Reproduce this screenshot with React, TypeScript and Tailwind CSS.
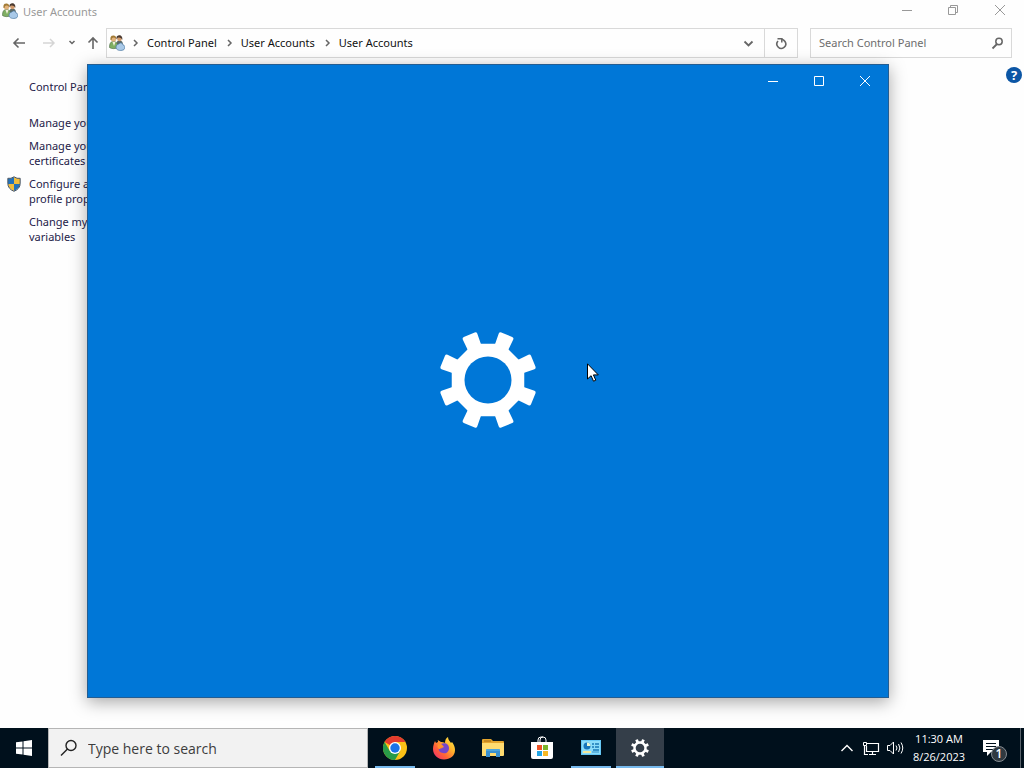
import type { ReactNode } from 'react';

const teeth = [22.5, 67.5, 112.5, 157.5, 202.5, 247.5, 292.5, 337.5];

const Gear = ({ className, hole }: { className: string; hole: string }) => (
  <svg viewBox="-50 -50 100 100" className={className} aria-hidden="true">
    <polygon
      fill="currentColor"
      points="-15,-37 15,-37 37,-15 37,15 15,37 -15,37 -37,15 -37,-15"
    />
    {teeth.map((angle) => (
      <path
        key={angle}
        fill="currentColor"
        transform={`rotate(${angle})`}
        d="M-7-30 -8-48Q-8-50-6-50H6Q8-50 8-48L7-30Z"
      />
    ))}
    <circle r="24" className={hole} />
  </svg>
);

const UsersIcon = () => (
  <svg viewBox="0 0 16 16" className="size-4 shrink-0" aria-hidden="true">
    <path d="M7 10c0-3 1-4.500 3.500-4.500S14 7 14 10Z" fill="#5d6a66" />
    <circle cx="10.500" cy="3.800" r="2.400" fill="#d19a6c" />
    <path d="M7.500 4.500C7 1 9 .3 10.500.3S14 2 13.200 5C13 3 10 2 8.500 3Z" fill="#4b3a30" />
    <path d="M.5 12.500c0-4 1-6 4-6S9 9 9 12.500c-2 1.500-7 1.500-8.500 0Z" fill="#7fae62" stroke="#4b6b43" strokeWidth=".6" />
    <path d="M3.500 7h3L5 11Z" fill="#f3f1dc" />
    <circle cx="4.500" cy="4" r="2.600" fill="#e2b27c" />
    <path d="M1.500 5C1 1 3 .5 4.500.5S7.500 1.500 7.200 4C5 2 3 2 2.500 5Z" fill="#a17a35" />
    <path d="M7 13c0-3 1.500-4 3-4 1-2 4-1 4 1 2 0 2.500 3 1 4.500-2 1.500-7 1.500-8-1.500Z" fill="#a9c9e8" stroke="#4f7ba3" strokeWidth=".7" />
  </svg>
);

const Shield = () => (
  <svg viewBox="0 0 14 16" className="h-4 w-3.5" aria-hidden="true">
    <path d="M7 1Q4 3 1 2.500V8H7Z" fill="#2372b9" />
    <path d="M7 1Q10 3 13 2.500V8H7Z" fill="#f0bd3d" />
    <path d="M1 8H7V15Q1 12 1 8Z" fill="#f0bd3d" />
    <path d="M13 8H7V15Q13 12 13 8Z" fill="#2372b9" />
    <path d="M7 .8Q4 3 .8 2.300V7Q.8 13 7 15.300 13.200 13 13.200 7V2.300Q10 3 7 .8Z" fill="none" stroke="#475463" />
  </svg>
);

const Chevron = () => (
  <svg viewBox="0 0 6 8" className="h-2 w-1.5 shrink-0" fill="none" stroke="#666" strokeWidth="1.500" aria-hidden="true">
    <path d="M1 1l3 3-3 3" />
  </svg>
);

const Glyph = ({ children }: { children: ReactNode }) => (
  <svg viewBox="0 0 16 16" className="size-4" fill="none" stroke="currentColor" aria-hidden="true">
    {children}
  </svg>
);

const IconButton = ({ label, className, children }: { label: string; className: string; children: ReactNode }) => (
  <button type="button" aria-label={label} className={`flex shrink-0 items-center justify-center ${className}`}>
    {children}
  </button>
);

const Minimize = () => <Glyph><path d="M3 8.500h10" /></Glyph>;
const Maximize = () => <Glyph><path d="M3.500 3.500h9v9h-9z" /></Glyph>;
const Restore = () => <Glyph><path d="M3.500 5.500h7v7h-7zM5.500 5.500v-2h7v7h-2" /></Glyph>;
const Close = () => <Glyph><path d="M3 3l10 10M13 3L3 13" /></Glyph>;

const crumbs = ['Control Panel', 'User Accounts', 'User Accounts'];

const tasks = [
  { lines: ['Manage your credentials'], shield: false },
  { lines: ['Manage your file encryption', 'certificates'], shield: false },
  { lines: ['Configure advanced user', 'profile properties'], shield: true },
  { lines: ['Change my environment', 'variables'], shield: false },
];

const Explorer = () => (
  <div className="flex-1 font-['Noto_Sans','Open_Sans',sans-serif] text-[11px] leading-[15px]">
    {/* Title bar */}
    <header className="flex h-6 items-start justify-between">
      <div className="flex items-center gap-[5px] pt-[3px] pl-0.5 text-[#999]">
        <UsersIcon />
        <h1>User Accounts</h1>
      </div>
      <div className="flex text-[#999]">
        <IconButton label="Minimize" className="h-5 w-[46px]"><Minimize /></IconButton>
        <IconButton label="Restore" className="h-5 w-[46px]"><Restore /></IconButton>
        <IconButton label="Close" className="h-5 w-12"><Close /></IconButton>
      </div>
    </header>

    {/* Address bar */}
    <div className="flex items-center pt-1 pr-3">
      <nav aria-label="History" className="flex w-[106px] shrink-0 items-center pl-[11px] text-[#666]">
        <IconButton label="Back" className="w-4">
          <Glyph><path strokeWidth="1.600" d="M14 8H3M7.500 3.500L3 8l4.500 4.500" /></Glyph>
        </IconButton>
        <IconButton label="Forward" className="ml-3.5 w-4 text-[#d5d5d5]">
          <Glyph><path strokeWidth="1.500" d="M2 8h11M9 4l4 4-4 4" /></Glyph>
        </IconButton>
        <IconButton label="Recent locations" className="ml-[7px] w-4">
          <Glyph><path strokeWidth="1.500" d="M5.500 6L8 8.500 10.500 6" /></Glyph>
        </IconButton>
        <IconButton label="Up" className="ml-[5px] w-4">
          <Glyph><path strokeWidth="1.600" d="M8 14V3M3.500 7.500L8 3l4.500 4.500" /></Glyph>
        </IconButton>
      </nav>
      <div className="flex h-[30px] flex-1 items-center border border-[#d9d9d9] pl-0.5">
        <UsersIcon />
        <div className="flex flex-1 items-center gap-0.5 pb-0.5">
          {crumbs.map((crumb, i) => (
            <div key={i} className="flex items-center">
              <span className="flex w-[22px] justify-center pt-0.5"><Chevron /></span>
              <a href="#" className="text-[#111]">{crumb}</a>
            </div>
          ))}
        </div>
        <IconButton label="Previous locations" className="h-7 w-8 text-[#666]">
          <Glyph><path strokeWidth="1.800" d="M4.500 6.500l4 4 4-4" /></Glyph>
        </IconButton>
        <IconButton label="Refresh" className="h-7 w-[33px] border-l border-[#d9d9d9] text-[#666]">
          <Glyph>
            <path strokeWidth="1.600" d="M5 6A4.400 4.400 0 1 0 12 6.500Q11 5 8.500 4" />
            <path strokeWidth="1.500" d="M4.500 3.800h4.300v3.700" />
          </Glyph>
        </IconButton>
      </div>
      <label className="ml-3 flex h-[30px] w-[202px] items-center border border-[#d9d9d9] pr-1.5 pl-2">
        <input
          type="text"
          aria-label="Search Control Panel"
          placeholder="Search Control Panel"
          className="min-w-0 flex-1 pb-0.5 outline-none placeholder:text-[#6d6d6d]"
        />
        <span className="text-[#666]">
          <Glyph><circle cx="10" cy="6.500" r="3.200" strokeWidth="1.500" /><path strokeWidth="1.800" d="M8 9l-4.500 4.500" /></Glyph>
        </span>
      </label>
    </div>

    <div className="flex items-start justify-between pt-2">
      {/* Task links */}
      <aside className="flex w-52 flex-col gap-2 pt-[13px] pl-[29px] text-[#242149]">
        <a href="#" className="mb-[13px]">Control Panel Home</a>
        {tasks.map((task) => (
          <a key={task.lines[0]} href="#" className="relative whitespace-nowrap">
            {task.shield && <span className="absolute top-0 -left-[22px]"><Shield /></span>}
            {task.lines.map((line) => (
              <span key={line} className="block">{line}</span>
            ))}
          </a>
        ))}
      </aside>
      <button type="button" aria-label="Help" className="mt-px mr-0.5 size-4 rounded-full bg-[#0c56a5] text-[13px] font-bold text-white">
        ?
      </button>
    </div>
  </div>
);

const SettingsWindow = () => (
  <section
    aria-label="Settings"
    className="absolute top-16 right-[135px] bottom-[70px] left-[87px] flex flex-col border border-[#245d91] bg-[#0077d7] text-white shadow-[0_4px_16px_rgba(0,0,0,0.35)]"
  >
    <div className="flex justify-end">
      <IconButton label="Minimize" className="h-8 w-[46px]"><Minimize /></IconButton>
      <IconButton label="Maximize" className="h-8 w-[46px]"><Maximize /></IconButton>
      <IconButton label="Close" className="h-8 w-[46px]"><Close /></IconButton>
    </div>
    <div className="flex flex-1 items-center justify-center pb-[34px]">
      <Gear className="size-[98px]" hole="fill-[#0077d7]" />
    </div>
  </section>
);

const Cursor = () => (
  <svg viewBox="0 0 12 19" className="absolute top-[363px] left-[587px] h-[19px] w-3" aria-hidden="true">
    <path d="M.5.800V16l3.600-3.300 2.400 5.500 2.300-1-2.400-5.300h4.900Z" fill="#fff" stroke="#000" />
  </svg>
);

const ChromeIcon = () => (
  <svg viewBox="0 0 24 24" className="size-6" aria-hidden="true">
    <circle cx="12" cy="12" r="12" fill="#fbc116" />
    <path d="M12 12L1.600 6A12 12 0 0 1 22.400 6H12Z" fill="#e33b2e" />
    <path d="M1.600 6A12 12 0 0 0 12 24L17.200 15 12 12 6.800 15Z" fill="#289b48" />
    <circle cx="12" cy="12" r="6" fill="#fff" />
    <circle cx="12" cy="12" r="4.700" fill="#1a73e8" />
  </svg>
);

const FirefoxIcon = () => (
  <svg viewBox="0 0 24 24" className="size-6" aria-hidden="true">
    <defs>
      <linearGradient id="fox" x1="1" y1="0" x2="0" y2="1">
        <stop offset="0" stopColor="#fff44f" />
        <stop offset=".35" stopColor="#ffb52b" />
        <stop offset=".65" stopColor="#ff6337" />
        <stop offset="1" stopColor="#ed2479" />
      </linearGradient>
    </defs>
    <path d="M3 5l1 2 2-1-.2-2L9 6c1 0 3 0 4 1 0-3 1-5 3-6 0 3 2 4 3 6l1-1c2 3 3 5 3 8 0 6-5 9.500-11 9.500S1 19 1 13c0-3 1-6 2-8Z" fill="url(#fox)" />
    <path d="M9 8c4-2 8 0 8 4 0 4-3 6-6 5-3 0-5-3-4-5 1 1 2 1 3 0l2-1c0-1-2-1-3-3Z" fill="#7646c9" />
    <path d="M6 8c2 0 4 0 5 2 0 1-3 1-3 3-2 0-3-2-2-5Z" fill="#ff922d" />
  </svg>
);

const FolderIcon = () => (
  <svg viewBox="0 0 24 24" className="size-6" aria-hidden="true">
    <path d="M1 4q0-1 1-1h8l2 2h10q1 0 1 1v4H1Z" fill="#e5a52d" />
    <path d="M1 7h22v12q0 1-1 1H1Z" fill="#ffdb70" />
    <path d="M3 5h7" stroke="#a96d16" />
    <path d="M5 21v-7q0-1 1-1h12q1 0 1 1v7h-4v-4H9v4Z" fill="#3990d0" />
    <path d="M5 14h14" stroke="#62b9e8" />
  </svg>
);

const StoreIcon = () => (
  <svg viewBox="0 0 24 24" className="size-6" aria-hidden="true">
    <path d="M8 7V4q0-3 3-3h2q3 0 3 3v3M10 7V4q0-3 3-3" fill="none" stroke="#fff" />
    <path d="M1 6h22v15q0 2-2 2H3q-2 0-2-2Z" fill="#fff" />
    <path d="M7 9h5v5H7z" fill="#ee5225" />
    <path d="M13 9h5v5h-5z" fill="#7cb52c" />
    <path d="M7 15h5v5H7z" fill="#22a5e5" />
    <path d="M13 15h5v5h-5z" fill="#f7b824" />
  </svg>
);

const ControlPanelIcon = () => (
  <svg viewBox="0 0 24 24" className="size-6" aria-hidden="true">
    <path d="M2 4h20v15H2z" fill="#65c7f4" />
    <path d="M3 5h18v13H3z" fill="#8bdcfa" />
    <circle cx="8" cy="10" r="3.500" fill="#1675bb" />
    <path d="M8 10V6.500A3.500 3.500 0 0 1 11.500 10Z" fill="#e8f7d4" />
    <path d="M13 8h2M16 8h4M13 11h2M16 11h4M14 14h6" stroke="#1a78b7" strokeWidth="1.500" />
    <path d="M4 16h8" stroke="#f2e99d" strokeWidth="2" />
    <path d="M13 16h7" stroke="#328fc5" />
  </svg>
);

const apps = [
  { name: 'Google Chrome', icon: <ChromeIcon />, state: 'w-10 mx-1 border-[#76b9ed]' },
  { name: 'Firefox', icon: <FirefoxIcon />, state: 'w-10 mx-1 border-transparent' },
  { name: 'File Explorer', icon: <FolderIcon />, state: 'w-10 mx-1 border-transparent' },
  { name: 'Microsoft Store', icon: <StoreIcon />, state: 'w-10 mx-1 border-transparent' },
  { name: 'Control Panel', icon: <ControlPanelIcon />, state: 'w-10 mx-1 border-[#76b9ed]' },
  { name: 'Settings', icon: <Gear className="size-[18px]" hole="fill-[#343e49]" />, state: 'w-12 border-[#76b9ed] bg-[#343e49]' },
];

const Taskbar = () => (
  <footer className="flex h-10 items-stretch bg-[#00101c] text-white">
    <IconButton label="Start" className="w-12">
      <Glyph>
        <path fill="currentColor" stroke="none" d="M0 2.300l6.500-.9v6.100H0zM7.500 1.200L16 0v7.500H7.500zM0 8.500h6.500v6.100L0 13.700zM7.500 8.500H16V16l-8.500-1.200z" />
      </Glyph>
    </IconButton>
    <label className="flex w-80 items-center border border-[#b5b5b5] bg-[#f2f2f2] pl-[11px] text-[#222]">
      <svg viewBox="0 0 18 18" className="size-[18px] shrink-0" fill="none" stroke="currentColor" strokeWidth="1.400" aria-hidden="true">
        <circle cx="11" cy="6.500" r="5" />
        <path d="M7.500 10L1 16.500" />
      </svg>
      <input
        type="text"
        aria-label="Type here to search"
        placeholder="Type here to search"
        className="ml-2.5 min-w-0 flex-1 text-[14px] outline-none placeholder:text-[#3d3d3d]"
      />
    </label>
    <div className="flex gap-px pl-[3px]">
      {apps.map((app) => (
        <IconButton key={app.name} label={app.name} className={`border-b-2 pt-0.5 ${app.state}`}>{app.icon}</IconButton>
      ))}
    </div>
    {/* Notification area */}
    <div className="ml-auto flex items-center">
      <IconButton label="Show hidden icons" className="w-6">
        <Glyph><path strokeWidth="1.400" d="M2.500 11L8 5.500l5.500 5.500" /></Glyph>
      </IconButton>
      <IconButton label="Network" className="w-6">
        <svg viewBox="0 0 18 16" className="h-4 w-[18px]" fill="none" stroke="currentColor" aria-hidden="true">
          <path strokeWidth="1.200" d="M5 3.500h11.500v8H4.500V6M10.500 11.500v3M7 14.500h7M2.500 6v8.500H6" />
          <path d="M1.500 2.500h3v3h-3z" />
        </svg>
      </IconButton>
      <IconButton label="Volume" className="w-6">
        <svg viewBox="0 0 18 16" className="h-4 w-[18px]" fill="none" stroke="currentColor" aria-hidden="true">
          <path d="M1.500 5.500H4l3.500-3.500v12L4 10.500H1.500zM10 5.500q2 2.500 0 5M12.500 4q2.800 4 0 8M15 2.500q3.500 5.500 0 11" />
        </svg>
      </IconButton>
      <time dateTime="2023-08-26T11:30" className="w-16 text-center text-[11px] leading-[18px]">
        <span className="block">11:30 AM</span>
        <span className="block">8/26/2023</span>
      </time>
      <button type="button" aria-label="Notifications, 1 new" className="relative flex h-10 w-[49px] items-center pl-3">
        <svg viewBox="0 0 16 16" className="size-4" aria-hidden="true">
          <path d="M0 0h16v12H8l-4 4v-4H0z" fill="#fff" />
          <path d="M3 3.500h10M3 6.500h10M3 9.500h7" stroke="#00101c" />
        </svg>
        <span className="absolute top-[18px] left-5 flex size-4 items-center justify-center rounded-full border border-[#858c92] bg-[#303940] text-[12px] font-semibold">1</span>
      </button>
      <span className="h-10 w-1 border-l border-[#59636c]" />
    </div>
  </footer>
);

export default function App() {
  return (
    <main className="relative flex min-h-screen flex-col overflow-hidden bg-[#fefefe] font-['Open_Sans','Noto_Sans',sans-serif]">
      <Explorer />
      <SettingsWindow />
      <Taskbar />
      <Cursor />
    </main>
  );
}
